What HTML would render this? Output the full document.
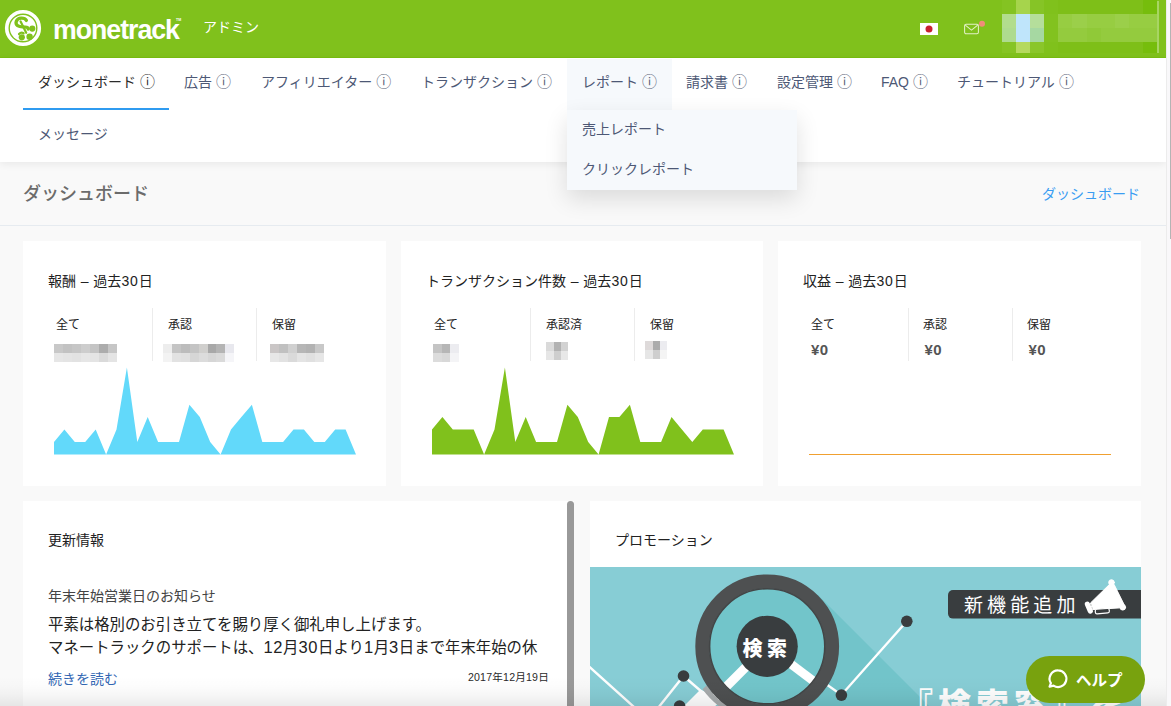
<!DOCTYPE html>
<html lang="ja">
<head>
<meta charset="utf-8">
<title>monetrack アドミン – ダッシュボード</title>
<style>
*{box-sizing:border-box;margin:0;padding:0}
html,body{width:1171px;height:706px;overflow:hidden}
body{position:relative;background:#f9f9f9;font-family:"Liberation Sans","Noto Sans CJK JP",sans-serif;font-size:14px;color:#333}
.abs{position:absolute}
#page{position:absolute;left:0;top:0;width:1166px;height:706px;overflow:hidden;background:#f9f9f9}
#sbar{position:absolute;left:1166px;top:0;width:5px;height:706px;background:#f9f8fa;border-left:1px solid #ececec}
#sthumb{position:absolute;left:1170px;top:3px;width:1px;height:236px;background:#b4b4b4}
/* header */
#hdr{position:absolute;left:0;top:0;width:1166px;height:58px;background:#80c11c;border-bottom:1px solid #79be10}
#brand{position:absolute;left:53px;top:12px;font-family:"Liberation Sans",sans-serif;font-weight:bold;font-size:29px;letter-spacing:-1.1px;color:#fff;line-height:36px;white-space:nowrap;transform-origin:0 0;transform:scale(.921,.95)}
#tm{position:absolute;left:176px;top:17.500px;font-size:3.500px;font-weight:bold;color:#fff;line-height:4px;font-family:"Liberation Sans",sans-serif}
#admin{position:absolute;left:203px;top:17px;font-size:14px;color:#fff;line-height:20px;white-space:nowrap}
#mosaic i{position:absolute;display:block}
/* nav */
#nav{position:absolute;left:0;top:58px;width:1166px;height:104px;background:#fff;box-shadow:0 2px 8px rgba(0,0,0,.07)}
.tab{position:absolute;height:51px;line-height:45px;font-size:14px;color:#4d5875;white-space:nowrap;padding:0 15px}
.tab .i{display:inline-block;font-size:15px;margin-left:4px;color:#555e75}
.tab.on{color:#2b2b2b;border-bottom:2px solid #2f9bf0}
.tab.on .i{color:#2b2b2b}
#dd{position:absolute;left:567px;top:110px;width:230px;height:80px;background:#f6f9fc;box-shadow:0 9px 22px rgba(0,0,0,.12)}
#dd div{position:absolute;left:15px;font-size:14px;color:#4d5875;line-height:20px;white-space:nowrap}
/* title */
#ptitle{position:absolute;left:23px;top:180.500px;font-size:18px;font-weight:500;color:#6b6b6b;line-height:26px;white-space:nowrap}
#crumb{position:absolute;right:26px;top:184px;font-size:14px;color:#3a9df2;line-height:20px;white-space:nowrap}
#tline{position:absolute;left:0;top:225px;width:1166px;height:1px;background:#e6ebf0}
/* cards */
.card{position:absolute;top:241px;width:363px;height:245px;background:#fff}
.ct{position:absolute;top:30px;left:25px;font-size:14px;color:#222;line-height:20px;white-space:nowrap;word-spacing:.9px}
.ct b{font-weight:400;letter-spacing:.9px}
.lbl{position:absolute;top:76px;font-size:12px;color:#222;line-height:16px;white-space:nowrap}
.val{position:absolute;top:100px;font-size:15px;letter-spacing:.5px;font-weight:bold;color:#555;line-height:18px;white-space:nowrap}
.sep{position:absolute;top:67px;width:1px;height:53px;background:#ececec}
.mzs i{position:absolute;display:block}
/* panels */
.panel{position:absolute;top:501px;height:210px;background:#fff}
.panel b{font-weight:400;font-size:16.500px;letter-spacing:.6px;line-height:10px}
.ph{position:absolute;left:25px;top:29px;font-size:14px;line-height:20px;color:#222;white-space:nowrap}
#help{position:absolute;z-index:5;left:1026px;top:656px;width:119px;height:46.700px;border-radius:24px;background:#78a20e}
#help span{position:absolute;left:50px;top:13.500px;font-size:15.500px;font-weight:bold;color:#fff;line-height:22px;white-space:nowrap}
#fade{position:absolute;left:0;top:676px;width:1166px;height:30px;background:linear-gradient(rgba(0,0,0,0),rgba(0,0,0,.012) 35%,rgba(0,0,0,.035) 65%,rgba(0,0,0,.08))}
</style>
</head>
<body>
<div id="page">

<!-- header -->
<div id="hdr">
  <svg class="abs" style="left:0;top:0" width="48" height="57" viewBox="0 0 48 57">
    <circle cx="23" cy="28" r="16.300" fill="none" stroke="#fff" stroke-width="3.600"/>
    <circle cx="23" cy="28" r="13.100" fill="#fff"/>
    <g fill="none" stroke="#80c11c" stroke-linecap="round" stroke-linejoin="round" transform="translate(0,.8)">
      <path d="M26.400 19.600C24.600 16.600 17.800 16.300 16.300 20.600 15 24.600 18.800 26 22.600 26 25.800 26 28.400 26.400 28.200 28.400" stroke-width="3.300"/>
      <path d="M20.600 20.600L26.200 32" stroke-width="2.200"/>
      <path d="M19 33.300c1.400-1.500 3.200-1.700 4.600-.8" stroke-width="2.200"/>
    </g>
    <g fill="#80c11c">
      <circle cx="32.300" cy="28.600" r="3.100"/>
      <circle cx="21.800" cy="37.300" r="3.100"/>
      <circle cx="29.600" cy="36.700" r="3.200"/>
    </g>
  </svg>
  <div id="brand">monetrack</div>
  <div id="tm">TM</div>
  <div id="admin">アドミン</div>
  <!-- flag -->
  <svg class="abs" style="left:920px;top:23px" width="18" height="12" viewBox="0 0 18 12"><rect width="18" height="12" fill="#fff"/><circle cx="9" cy="6" r="3.500" fill="#c8202f"/></svg>
  <!-- mail -->
  <svg class="abs" style="left:963px;top:19px" width="24" height="18" viewBox="0 0 24 18">
    <rect x="1.600" y="5.300" width="13.800" height="9.400" rx="1.500" fill="none" stroke="#e2f1c6" stroke-width="1.050"/>
    <path d="M2.300 6.200l6.200 5 6.200-5" fill="none" stroke="#e2f1c6" stroke-width="1.050"/>
    <circle cx="19" cy="4.800" r="3" fill="#f08c78"/>
  </svg>
  <!-- blurred user area -->
  <div id="mosaic"><i style="left:1002px;top:0px;width:14px;height:14px;background:#84c322"></i><i style="left:1002px;top:14px;width:14px;height:14px;background:#b2dd8d"></i><i style="left:1002px;top:28px;width:14px;height:14px;background:#aedb8f"></i><i style="left:1002px;top:42px;width:14px;height:11px;background:#86c424"></i><i style="left:1016px;top:0px;width:14px;height:14px;background:#a6d44c"></i><i style="left:1016px;top:14px;width:14px;height:14px;background:#bfe5fb"></i><i style="left:1016px;top:28px;width:14px;height:14px;background:#bfe5fb"></i><i style="left:1016px;top:42px;width:14px;height:11px;background:#b5d95e"></i><i style="left:1030px;top:0px;width:14px;height:14px;background:#86c426"></i><i style="left:1030px;top:14px;width:14px;height:14px;background:#b5de9b"></i><i style="left:1030px;top:28px;width:14px;height:14px;background:#a6d8a2"></i><i style="left:1030px;top:42px;width:14px;height:11px;background:#8ac62a"></i><i style="left:1044px;top:0px;width:14px;height:14px;background:#80c11c"></i><i style="left:1044px;top:14px;width:14px;height:14px;background:#82c21f"></i><i style="left:1044px;top:28px;width:14px;height:14px;background:#82c21f"></i><i style="left:1044px;top:42px;width:14px;height:11px;background:#80c11c"></i><i style="left:1058px;top:0px;width:14px;height:14px;background:#7ebf18"></i><i style="left:1058px;top:14px;width:14px;height:14px;background:#97cd42"></i><i style="left:1058px;top:28px;width:14px;height:14px;background:#94cb3e"></i><i style="left:1058px;top:42px;width:14px;height:11px;background:#7ebf18"></i><i style="left:1072px;top:0px;width:15px;height:14px;background:#7ebf18"></i><i style="left:1072px;top:14px;width:15px;height:14px;background:#9bcf4a"></i><i style="left:1072px;top:28px;width:15px;height:14px;background:#94cb3e"></i><i style="left:1072px;top:42px;width:15px;height:11px;background:#7ebf18"></i><i style="left:1087px;top:0px;width:14px;height:14px;background:#7ebf18"></i><i style="left:1087px;top:14px;width:14px;height:14px;background:#97cd42"></i><i style="left:1087px;top:28px;width:14px;height:14px;background:#90c938"></i><i style="left:1087px;top:42px;width:14px;height:11px;background:#7ebf18"></i><i style="left:1101px;top:0px;width:14px;height:14px;background:#7ebf18"></i><i style="left:1101px;top:14px;width:14px;height:14px;background:#97cd42"></i><i style="left:1101px;top:28px;width:14px;height:14px;background:#94cb3e"></i><i style="left:1101px;top:42px;width:14px;height:11px;background:#7ebf18"></i><i style="left:1115px;top:0px;width:14px;height:14px;background:#7ebf18"></i><i style="left:1115px;top:14px;width:14px;height:14px;background:#9bcf4a"></i><i style="left:1115px;top:28px;width:14px;height:14px;background:#94cb3e"></i><i style="left:1115px;top:42px;width:14px;height:11px;background:#7ebf18"></i><i style="left:1129px;top:0px;width:14px;height:14px;background:#7ebf18"></i><i style="left:1129px;top:14px;width:14px;height:14px;background:#97cd42"></i><i style="left:1129px;top:28px;width:14px;height:14px;background:#94cb3e"></i><i style="left:1129px;top:42px;width:14px;height:11px;background:#7ebf18"></i><i style="left:1143px;top:0px;width:14px;height:14px;background:#76bd0c"></i><i style="left:1143px;top:14px;width:14px;height:14px;background:#97cd42"></i><i style="left:1143px;top:28px;width:14px;height:14px;background:#94cb3e"></i><i style="left:1143px;top:42px;width:14px;height:11px;background:#76bd0c"></i></div>
  <div class="abs" style="left:1157px;top:1px;width:2px;height:52px;background:#a8d564"></div>
</div>

<!-- nav -->
<div id="nav">
  <div class="tab on" style="left:23px;top:1px;width:146px">ダッシュボード<span class="i">ⓘ</span></div>
  <div class="tab" style="left:169px;top:1px">広告<span class="i">ⓘ</span></div>
  <div class="tab" style="left:246px;top:1px">アフィリエイター<span class="i">ⓘ</span></div>
  <div class="tab" style="left:406px;top:1px">トランザクション<span class="i">ⓘ</span></div>
  <div class="tab" style="left:567px;top:1px;background:#f6f9fc">レポート<span class="i">ⓘ</span></div>
  <div class="tab" style="left:671px;top:1px">請求書<span class="i">ⓘ</span></div>
  <div class="tab" style="left:762px;top:1px">設定管理<span class="i">ⓘ</span></div>
  <div class="tab" style="left:866px;top:1px">FAQ<span class="i">ⓘ</span></div>
  <div class="tab" style="left:942px;top:1px">チュートリアル<span class="i">ⓘ</span></div>
  <div class="tab" style="left:23px;top:54px;height:50px">メッセージ</div>
</div>

<!-- page title -->
<div id="ptitle">ダッシュボード</div>
<div id="crumb">ダッシュボード</div>
<div id="tline"></div>

<!-- cards -->
<div class="card" style="left:23px">
  <div class="ct">報酬 – 過去<b>30</b>日</div>
  <div class="mzs"><i style="left:31.0px;top:103px;width:9.3px;height:9px;background:#c8c8c8"></i><i style="left:40.0px;top:103px;width:9.3px;height:9px;background:#c2c2c2"></i><i style="left:49.0px;top:103px;width:9.3px;height:9px;background:#c6c6c6"></i><i style="left:58.0px;top:103px;width:9.3px;height:9px;background:#cdcdcd"></i><i style="left:67.0px;top:103px;width:9.3px;height:9px;background:#c4c4c4"></i><i style="left:76.0px;top:103px;width:9.3px;height:9px;background:#acacac"></i><i style="left:85.0px;top:103px;width:9.3px;height:9px;background:#c6c6c6"></i><i style="left:31.0px;top:112px;width:9.3px;height:9px;background:#e6e6e6"></i><i style="left:40.0px;top:112px;width:9.3px;height:9px;background:#e4e4e4"></i><i style="left:49.0px;top:112px;width:9.3px;height:9px;background:#e2e2e2"></i><i style="left:58.0px;top:112px;width:9.3px;height:9px;background:#e6e6e6"></i><i style="left:67.0px;top:112px;width:9.3px;height:9px;background:#e4e4e4"></i><i style="left:76.0px;top:112px;width:9.3px;height:9px;background:#dadada"></i><i style="left:85.0px;top:112px;width:9.3px;height:9px;background:#e4e4e4"></i><i style="left:140.0px;top:103px;width:9.2px;height:9px;background:#ededed"></i><i style="left:148.9px;top:103px;width:9.2px;height:9px;background:#c4c4c4"></i><i style="left:157.8px;top:103px;width:9.2px;height:9px;background:#bcbcbc"></i><i style="left:166.7px;top:103px;width:9.2px;height:9px;background:#c4c4c4"></i><i style="left:175.6px;top:103px;width:9.2px;height:9px;background:#d0cfcd"></i><i style="left:184.5px;top:103px;width:9.2px;height:9px;background:#a8a8a8"></i><i style="left:193.4px;top:103px;width:9.2px;height:9px;background:#b4b4b4"></i><i style="left:202.3px;top:103px;width:9.2px;height:9px;background:#e8e8ee"></i><i style="left:140.0px;top:112px;width:9.2px;height:9px;background:#f3f3f3"></i><i style="left:148.9px;top:112px;width:9.2px;height:9px;background:#e2e2e2"></i><i style="left:157.8px;top:112px;width:9.2px;height:9px;background:#e0e0e0"></i><i style="left:166.7px;top:112px;width:9.2px;height:9px;background:#d6d6d6"></i><i style="left:175.6px;top:112px;width:9.2px;height:9px;background:#dcdcdc"></i><i style="left:184.5px;top:112px;width:9.2px;height:9px;background:#d6d6d6"></i><i style="left:193.4px;top:112px;width:9.2px;height:9px;background:#dadada"></i><i style="left:202.3px;top:112px;width:9.2px;height:9px;background:#f5f5f8"></i><i style="left:247.0px;top:103px;width:9.3px;height:9px;background:#cac6c6"></i><i style="left:256.0px;top:103px;width:9.3px;height:9px;background:#c0c0c0"></i><i style="left:265.0px;top:103px;width:9.3px;height:9px;background:#d0d0d0"></i><i style="left:274.0px;top:103px;width:9.3px;height:9px;background:#b6b6b6"></i><i style="left:283.0px;top:103px;width:9.3px;height:9px;background:#b2b2b2"></i><i style="left:292.0px;top:103px;width:9.3px;height:9px;background:#c8c8c8"></i><i style="left:247.0px;top:112px;width:9.3px;height:9px;background:#e7e7e7"></i><i style="left:256.0px;top:112px;width:9.3px;height:9px;background:#e2e2e2"></i><i style="left:265.0px;top:112px;width:9.3px;height:9px;background:#dadada"></i><i style="left:274.0px;top:112px;width:9.3px;height:9px;background:#e4e4e4"></i><i style="left:283.0px;top:112px;width:9.3px;height:9px;background:#e0e0e0"></i><i style="left:292.0px;top:112px;width:9.3px;height:9px;background:#e6e6e6"></i></div>
  <div class="lbl" style="left:33px">全て</div>
  <div class="lbl" style="left:145px">承認</div>
  <div class="lbl" style="left:249px">保留</div>
  <div class="sep" style="left:129px"></div>
  <div class="sep" style="left:233px"></div>
  <svg class="abs" style="left:0;top:0" width="363" height="245" viewBox="23 241 363 245">
    <polygon fill="#62d9fa" points="54.0,454.5 54.0,442.1 64.4,429.6 74.8,442.1 85.2,442.1 95.7,429.6 106.1,454.5 116.5,429.6 126.9,367.4 137.3,442.1 147.7,417.1 158.1,442.1 168.6,442.1 179.0,442.1 189.4,404.7 199.8,417.1 210.2,442.1 220.6,454.5 231.0,429.6 241.4,417.1 251.9,404.7 262.3,442.1 272.7,442.1 283.1,442.1 293.5,429.6 303.9,429.6 314.3,442.1 324.8,442.1 335.2,429.6 345.6,429.6 356.0,454.5 356.0,454.5"/>
  </svg>
</div>
<div class="card" style="left:401px;width:362px">
  <div class="ct">トランザクション件数 – 過去<b>30</b>日</div>
  <div class="mzs"><i style="left:32.3px;top:103px;width:8.7px;height:9px;background:#c4c4c4"></i><i style="left:40.7px;top:103px;width:8.7px;height:9px;background:#b6b6b6"></i><i style="left:49.1px;top:103px;width:8.7px;height:9px;background:#ececf0"></i><i style="left:32.3px;top:112px;width:8.7px;height:9px;background:#dcdcdc"></i><i style="left:40.7px;top:112px;width:8.7px;height:9px;background:#d8d8d8"></i><i style="left:49.1px;top:112px;width:8.7px;height:9px;background:#f4f4f6"></i><i style="left:145.3px;top:101px;width:7.6px;height:9px;background:#dadada"></i><i style="left:152.6px;top:101px;width:7.6px;height:9px;background:#b2b2b2"></i><i style="left:159.9px;top:101px;width:7.6px;height:9px;background:#d2d2d2"></i><i style="left:145.3px;top:110px;width:7.6px;height:9px;background:#e6e6e6"></i><i style="left:152.6px;top:110px;width:7.6px;height:9px;background:#cecece"></i><i style="left:159.9px;top:110px;width:7.6px;height:9px;background:#e8e8e8"></i><i style="left:244.3px;top:100px;width:7.5px;height:9px;background:#dedada"></i><i style="left:251.5px;top:100px;width:7.5px;height:9px;background:#acacac"></i><i style="left:258.7px;top:100px;width:7.5px;height:9px;background:#ececf0"></i><i style="left:244.3px;top:109px;width:7.5px;height:9px;background:#e6e6e6"></i><i style="left:251.5px;top:109px;width:7.5px;height:9px;background:#cecece"></i><i style="left:258.7px;top:109px;width:7.5px;height:9px;background:#f4f4f4"></i></div>
  <div class="lbl" style="left:33px">全て</div>
  <div class="lbl" style="left:145px">承認済</div>
  <div class="lbl" style="left:249px">保留</div>
  <div class="sep" style="left:129px"></div>
  <div class="sep" style="left:233px"></div>
  <svg class="abs" style="left:0;top:0" width="363" height="245" viewBox="23 241 363 245">
    <polygon fill="#80c11c" points="54.0,454.5 54.0,429.6 64.4,417.1 74.8,429.6 85.2,429.6 95.7,429.6 106.1,454.5 116.5,429.6 126.9,367.4 137.3,442.1 147.7,417.1 158.1,442.1 168.6,442.1 179.0,442.1 189.4,404.7 199.8,417.1 210.2,442.1 220.6,454.5 231.0,417.1 241.4,417.1 251.9,404.7 262.3,442.1 272.7,442.1 283.1,442.1 293.5,417.1 303.9,429.6 314.3,442.1 324.8,429.6 335.2,429.6 345.6,429.6 356.0,454.5 356.0,454.5"/>
  </svg>
</div>
<div class="card" style="left:778px">
  <div class="ct">収益 – 過去<b>30</b>日</div>
  <div class="lbl" style="left:33px">全て</div>
  <div class="lbl" style="left:145px">承認</div>
  <div class="lbl" style="left:249px">保留</div>
  <div class="val" style="left:33px">¥0</div>
  <div class="val" style="left:146.500px">¥0</div>
  <div class="val" style="left:250.500px">¥0</div>
  <div class="sep" style="left:130px"></div>
  <div class="sep" style="left:234px"></div>
  <div class="abs" style="left:31px;top:213px;width:302px;height:1px;background:#f0a030"></div>
</div>

<!-- dropdown -->
<div id="dd">
  <div style="top:9px">売上レポート</div>
  <div style="top:49px">クリックレポート</div>
</div>


<!-- bottom panels -->
<div class="panel" style="left:23px;width:551px">
  <div class="ph">更新情報</div>
  <div class="abs" style="left:25px;top:85px;font-size:14px;line-height:20px;color:#444;white-space:nowrap">年末年始営業日のお知らせ</div>
  <div class="abs" style="left:25px;top:112px;font-size:15.400px;line-height:23px;color:#222;white-space:nowrap">平素は格別のお引き立てを賜り厚く御礼申し上げます。<br>マネートラックのサポートは、<b>12</b>月<b>30</b>日より<b>1</b>月<b>3</b>日まで年末年始の休</div>
  <div class="abs" style="left:25px;top:168px;font-size:14px;line-height:20px;color:#3166b3;white-space:nowrap">続きを読む</div>
  <div class="abs" style="right:25px;top:169px;font-size:10.600px;letter-spacing:.2px;line-height:14px;color:#2a2a2a;white-space:nowrap">2017年12月19日</div>
  <div class="abs" style="left:544px;top:0;width:7px;height:220px;border-radius:4px;background:#999"></div>
</div>
<div class="panel" style="left:590px;width:551px">
  <div class="ph">プロモーション</div>
  <svg class="abs" style="left:0;top:66px" width="551" height="139" viewBox="590 567 551 139">
    <rect x="590" y="567" width="551" height="139" fill="#87cdd5"/>
    <!-- long shadow -->
    <polygon points="818,595 1141,918 937,918 716,697" fill="#72c4ca"/>
    <!-- chart lines -->
    <g stroke="#fff" stroke-width="2.400" fill="none" stroke-linecap="round">
      <path d="M588 665.600 L634 707"/>
      <path d="M658 708 L683.500 676 L702 692"/>
      <path d="M826 684 L841.400 695 L906.800 621.300"/>
    </g>
    <!-- handle -->
    <path d="M682 708 L700.500 689.500 L722 700 L713 708Z" fill="#fff"/>
    <path d="M702.600 689.300 A77 77 0 0 0 724.500 710 L729 704 A72 72 0 0 1 706.500 685.500Z" fill="#a7abac"/>
    <!-- magnifier -->
    <circle cx="767.200" cy="646.300" r="60" fill="#72c5ca"/>
    <g stroke="#fff" stroke-width="9" fill="none">
      <path d="M767 646 L716 697"/>
      <path d="M767 646 L822 687.500"/>
    </g>
    <circle cx="767.200" cy="646.300" r="64.900" fill="none" stroke="#4e5051" stroke-width="14"/>
    <circle cx="767.200" cy="646.300" r="57.600" fill="none" stroke="#434546" stroke-width="1.600"/>
    <circle cx="767.200" cy="646.300" r="30.600" fill="#393d3f"/>
    <text x="742.600" y="655.500" font-family="'Liberation Sans','Noto Sans CJK JP',sans-serif" font-weight="900" font-size="20" letter-spacing="4.300" fill="#fff">検索</text>
    <g fill="#393d3f">
      <circle cx="683.500" cy="676" r="5.800"/>
      <circle cx="679.600" cy="706" r="5.800"/>
      <circle cx="841.400" cy="695.100" r="5.800"/>
      <circle cx="906.800" cy="621.300" r="5.800"/>
    </g>
    <!-- new feature label -->
    <path d="M953 590 H1141 V618.600 H953 a5 5 0 0 1 -5 -5 V595 a5 5 0 0 1 5 -5z" fill="#393d3f"/>
    <text x="964" y="611.500" font-family="'Liberation Sans','Noto Sans CJK JP',sans-serif" font-weight="400" font-size="19" letter-spacing="4.100" fill="#fff">新機能追加</text>
    <!-- megaphone -->
    <g fill="#fff" stroke="#fff" stroke-linejoin="round" stroke-linecap="round">
      <path d="M1090.700 602.800 L1109.300 584.600 L1114 584.300 L1124.800 606 L1121.500 607.800 L1092.800 609.600 Z" stroke-width="1"/>
      <circle cx="1111.500" cy="582.500" r="2.800" stroke-width="1"/>
      <circle cx="1122.800" cy="607.300" r="2.800" stroke-width="1"/>
      <path d="M1087.400 604.200 L1090.300 611" stroke-width="5.200" fill="none"/>
      <rect x="1095.300" y="608.800" width="14" height="4.600" rx="1.600" fill="#393d3f" stroke-width="1.200" transform="rotate(-5 1102 611)"/>
    </g>
    <!-- headline -->
    <text x="900" y="716.500" font-family="'Liberation Sans','Noto Sans CJK JP',sans-serif" font-weight="900" font-size="33" letter-spacing="5" fill="#fff">『検索窓』を</text>
  </svg>
</div>

<!-- help button -->
<div id="help">
  <svg class="abs" style="left:20px;top:11px" width="24" height="24" viewBox="0 0 24 24" fill="none" stroke="#fff" stroke-width="2.200" stroke-linejoin="round">
    <path d="M12.200 3.400a8.300 8.300 0 1 1 -4.700 15.200L3.600 19.700l1.300-3.500A8.300 8.300 0 0 1 12.200 3.400z"/>
  </svg>
  <span>ヘルプ</span>
</div>
<div id="fade"></div>

</div>
<div id="sbar"></div><div id="sthumb"></div>
</body>
</html>
